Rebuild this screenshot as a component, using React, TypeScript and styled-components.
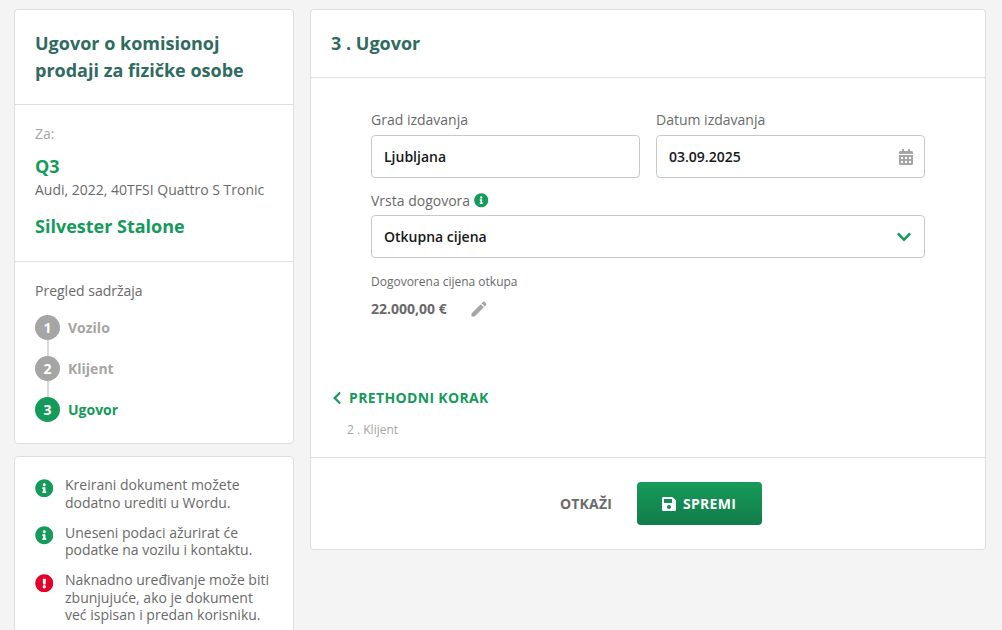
import React from "react";
import styled, { createGlobalStyle } from "styled-components";
import {
  FaCalendarAlt,
  FaChevronDown,
  FaChevronLeft,
  FaExclamationCircle,
  FaInfoCircle,
  FaSave,
} from "react-icons/fa";
import { MdEdit } from "react-icons/md";

const GREEN = "#149a5a";
const GREY = "#a5a5a5";
const TEXT = "#6a6a6a";
const LINE = "#dfdfdf";

const GlobalStyle = createGlobalStyle`
  html, body {
    margin: 0;
    height: 630px;
    overflow: hidden;
    background: #f4f4f4;
    font-family: "Open Sans", "Liberation Sans", sans-serif;
  }
  * { box-sizing: border-box; }
`;

const Page = styled.div`
  display: flex;
  align-items: flex-start;
  gap: 16px;
  padding: 9px 16px 0 14px;
  height: 630px;
  overflow: hidden;
`;

const Sidebar = styled.aside`
  width: 280px;
  flex: none;
  display: flex;
  flex-direction: column;
  gap: 12px;
`;

const Card = styled.div`
  background: #fff;
  border: 1px solid ${LINE};
  border-radius: 4px;
`;

const SideHeader = styled.div`
  padding: 20px 20px 20px;
  border-bottom: 1px solid ${LINE};
`;

const SideTitle = styled.h2`
  margin: 0;
  font-size: 18px;
  line-height: 27px;
  font-weight: 700;
  color: #2f6b60;
`;

const SideSection = styled.div`
  padding: 19px 20px 23px;
  border-bottom: 1px solid ${LINE};
`;

const ForLabel = styled.div`
  font-size: 14px;
  line-height: 19px;
  color: ${GREY};
`;

const CarName = styled.div`
  margin-top: 11px;
  font-size: 18px;
  line-height: 24px;
  font-weight: 700;
  color: ${GREEN};
`;

const CarInfo = styled.div`
  margin-top: 2px;
  font-size: 14px;
  line-height: 19px;
  color: ${TEXT};
`;

const ClientName = styled.div`
  margin-top: 15px;
  font-size: 18px;
  line-height: 24px;
  font-weight: 700;
  color: ${GREEN};
`;

const Overview = styled.div`
  padding: 19px 20px 21px;
`;

const OverviewTitle = styled.div`
  font-size: 14px;
  line-height: 19px;
  color: ${TEXT};
`;

const Steps = styled.div`
  margin-top: 15px;
  display: flex;
  flex-direction: column;
  gap: 16px;
`;

const Step = styled.div`
  position: relative;
  display: flex;
  align-items: center;
  gap: 8px;
  height: 25px;

  &:not(:last-child)::after {
    content: "";
    position: absolute;
    left: 12px;
    top: 25px;
    width: 2px;
    height: 16px;
    background: #d9d9d9;
  }
`;

const StepDot = styled.span<{ $active?: boolean }>`
  width: 25px;
  height: 25px;
  border-radius: 50%;
  display: flex;
  align-items: center;
  justify-content: center;
  background: ${(p) => (p.$active ? GREEN : GREY)};
  color: #fff;
  font-size: 14px;
  font-weight: 700;
`;

const StepLabel = styled.span<{ $active?: boolean }>`
  font-size: 14px;
  font-weight: 700;
  color: ${(p) => (p.$active ? GREEN : GREY)};
`;

const Notes = styled(Card)`
  padding: 19px 20px 14px;
  display: flex;
  flex-direction: column;
  gap: 12.6px;
`;

const Note = styled.div`
  display: flex;
  gap: 12px;
  font-size: 14px;
  line-height: 17.5px;
  color: ${TEXT};
`;

const NoteIcon = styled.span<{ $color: string }>`
  flex: none;
  width: 18px;
  height: 18px;
  margin-top: 3px;
  color: ${(p) => p.$color};
  font-size: 18.6px;
  line-height: 18px;

  svg {
    display: block;
    margin: -0.3px;
  }
`;

const Main = styled(Card)`
  flex: 1;
  min-width: 0;
`;

const MainHeader = styled.div`
  height: 68px;
  padding: 0 20px 2px;
  display: flex;
  align-items: center;
  border-bottom: 1px solid ${LINE};
`;

const MainTitle = styled.h1`
  margin: 0;
  font-size: 18px;
  font-weight: 700;
  color: #2f6b60;
`;

const Form = styled.div`
  padding: 32px 60px 0;
  display: flex;
  flex-direction: column;
`;

const FieldRow = styled.div`
  display: flex;
  gap: 16px;
`;

const Field = styled.div`
  flex: 1;
  min-width: 0;
`;

const Label = styled.div`
  display: flex;
  align-items: center;
  gap: 4px;
  height: 19px;
  margin-bottom: 6px;
  font-size: 14px;
  color: ${TEXT};
`;

const InputBox = styled.div`
  height: 43px;
  padding: 0 12px;
  display: flex;
  align-items: center;
  justify-content: space-between;
  border: 1px solid #c9c9c9;
  border-radius: 4px;
  background: #fff;
  font-size: 14px;
  font-weight: 600;
  color: #16181a;
`;

const CalendarIcon = styled(FaCalendarAlt)`
  margin-right: -2px;
`;

const SelectField = styled.div`
  margin-top: 13px;

  ${Label} {
    margin-bottom: 5px;
  }
`;

const AgreedLabel = styled.div`
  margin-top: 16px;
  font-size: 12px;
  line-height: 16px;
  color: ${TEXT};
`;

const AgreedRow = styled.div`
  margin-top: 9px;
  display: flex;
  align-items: center;
  gap: 22px;
  height: 19px;
  font-size: 14px;
  line-height: 19px;
  font-weight: 700;
  color: ${TEXT};
`;

const PrevStep = styled.div`
  margin-top: 70px;
  padding: 0 21px 19px;
  border-bottom: 1px solid ${LINE};
`;

const PrevLink = styled.div`
  display: flex;
  align-items: center;
  gap: 5.5px;
  font-size: 14px;
  line-height: 19px;
  font-weight: 700;
  letter-spacing: 0.35px;
  color: ${GREEN};
`;

const BackIcon = styled(FaChevronLeft)`
  margin-left: -2.5px;
`;

const PrevName = styled.div`
  margin-top: 15px;
  padding-left: 15px;
  font-size: 12px;
  line-height: 16px;
  color: ${GREY};
`;

const Actions = styled.div`
  height: 91px;
  padding-left: 26px;
  display: flex;
  align-items: center;
  justify-content: center;
  gap: 25px;
`;

const CancelButton = styled.button`
  border: 0;
  padding: 0;
  background: transparent;
  font: 700 14px "Open Sans", sans-serif;
  letter-spacing: 0.2px;
  color: ${TEXT};
`;

const SaveButton = styled.button`
  width: 125px;
  height: 43px;
  padding: 0 2px 0 0;
  border: 0;
  border-radius: 4px;
  display: flex;
  align-items: center;
  justify-content: center;
  gap: 6px;
  background: linear-gradient(#169b5b, #127c49);
  color: #fff;
  font: 700 14px "Open Sans", sans-serif;
  letter-spacing: 0.3px;
`;

const steps = ["Vozilo", "Klijent", "Ugovor"];

const notes = [
  { color: GREEN, warn: false, lines: ["Kreirani dokument možete", "dodatno urediti u Wordu."] },
  { color: GREEN, warn: false, lines: ["Uneseni podaci ažurirat će", "podatke na vozilu i kontaktu."] },
  {
    color: "#e4002b",
    warn: true,
    lines: ["Naknadno uređivanje može biti", "zbunjujuće, ako je dokument", "već ispisan i predan korisniku."],
  },
];

export default function App() {
  return (
    <>
      <GlobalStyle />
      <Page>
        <Sidebar>
          <Card>
            <SideHeader>
              <SideTitle>
                Ugovor o komisionoj
                <br />
                prodaji za fizičke osobe
              </SideTitle>
            </SideHeader>
            <SideSection>
              <ForLabel>Za:</ForLabel>
              <CarName>Q3</CarName>
              <CarInfo>Audi, 2022, 40TFSI Quattro S Tronic</CarInfo>
              <ClientName>Silvester Stalone</ClientName>
            </SideSection>
            <Overview>
              <OverviewTitle>Pregled sadržaja</OverviewTitle>
              <Steps>
                {steps.map((name, i) => (
                  <Step key={name}>
                    <StepDot $active={i === 2}>{i + 1}</StepDot>
                    <StepLabel $active={i === 2}>{name}</StepLabel>
                  </Step>
                ))}
              </Steps>
            </Overview>
          </Card>
          <Notes>
            {notes.map((n) => (
              <Note key={n.lines[0]}>
                <NoteIcon $color={n.color}>{n.warn ? <FaExclamationCircle /> : <FaInfoCircle />}</NoteIcon>
                <div>
                  {n.lines.map((l) => (
                    <div key={l}>{l}</div>
                  ))}
                </div>
              </Note>
            ))}
          </Notes>
        </Sidebar>
        <Main>
          <MainHeader>
            <MainTitle>3 . Ugovor</MainTitle>
          </MainHeader>
          <Form>
            <FieldRow>
              <Field>
                <Label>Grad izdavanja</Label>
                <InputBox>Ljubljana</InputBox>
              </Field>
              <Field>
                <Label>Datum izdavanja</Label>
                <InputBox>
                  03.09.2025
                  <CalendarIcon size={16} color={GREY} />
                </InputBox>
              </Field>
            </FieldRow>
            <SelectField>
              <Label>
                Vrsta dogovora
                <FaInfoCircle size={14.5} color={GREEN} />
              </Label>
              <InputBox>
                Otkupna cijena
                <FaChevronDown size={16} color={GREEN} />
              </InputBox>
            </SelectField>
            <AgreedLabel>Dogovorena cijena otkupa</AgreedLabel>
            <AgreedRow>
              22.000,00 €
              <MdEdit size={20} color={GREY} />
            </AgreedRow>
          </Form>
          <PrevStep>
            <PrevLink>
              <BackIcon size={14} />
              PRETHODNI KORAK
            </PrevLink>
            <PrevName>2 . Klijent</PrevName>
          </PrevStep>
          <Actions>
            <CancelButton>OTKAŽI</CancelButton>
            <SaveButton>
              <FaSave size={16} />
              SPREMI
            </SaveButton>
          </Actions>
        </Main>
      </Page>
    </>
  );
}
